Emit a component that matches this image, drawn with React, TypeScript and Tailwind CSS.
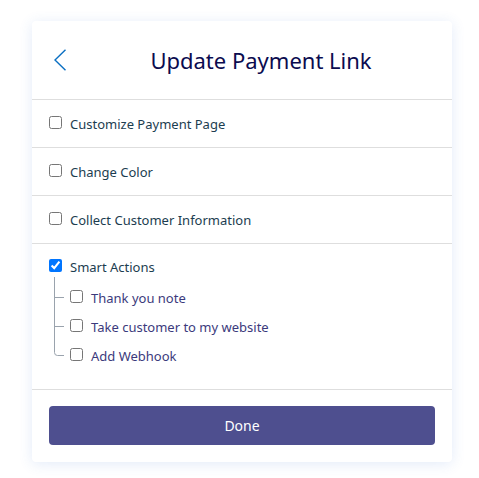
import React, { useState } from "react";

const font = { fontFamily: '"Noto Sans", "Open Sans", sans-serif' };

const sections = [
  "Customize Payment Page",
  "Change Color",
  "Collect Customer Information",
];

const smartChildren = ["Thank you note", "Take customer to my website", "Add Webhook"];

const App: React.FC = () => {
  const [checked, setChecked] = useState<Record<string, boolean>>({
    "Smart Actions": true,
  });

  const toggle = (key: string) =>
    setChecked((prev) => ({ ...prev, [key]: !prev[key] }));

  return (
    <div className="min-h-screen bg-white pt-[21px] pl-[32px]" style={font}>
      <div className="w-[420px] bg-white rounded-[4px] shadow-[0_2px_14px_rgba(60,110,210,0.14)]">
        {/* header */}
        <div className="flex items-center h-[78px]">
          <div className="w-[38px] pl-[22px] flex items-center">
            <svg width="12" height="22" viewBox="0 0 12 22" fill="none">
              <path d="M11.5 0.8 L1 11 L11.5 21.2" stroke="#0a6fc2" strokeWidth="1.4" />
            </svg>
          </div>
          <h1 className="flex-1 text-center text-[22px] text-[#0b0b4f] leading-none">
            Update Payment Link
          </h1>
        </div>

        {sections.map((label) => (
          <label
            key={label}
            className="flex items-center h-[48px] border-t border-[#dedede] px-[17px] gap-[8px] cursor-pointer"
          >
            <input
              type="checkbox"
              className="m-0 mb-[3px] w-[13px] h-[13px]"
              checked={!!checked[label]}
              onChange={() => toggle(label)}
            />
            <span className="text-[13px] text-[#1c3d50] mt-[2px]">{label}</span>
          </label>
        ))}

        {/* smart actions */}
        <div className="border-t border-[#dedede] pt-[12px]">
          <label className="flex items-center h-[21px] px-[17px] gap-[8px] cursor-pointer">
            <input
              type="checkbox"
              className="m-0 mb-[3px] w-[13px] h-[13px]"
              checked={!!checked["Smart Actions"]}
              onChange={() => toggle("Smart Actions")}
            />
            <span className="text-[13px] text-[#1c3d50] mt-[2px]">Smart Actions</span>
          </label>
          <div className="relative ml-[22px] pl-[16px] pt-[6px] pb-[19px]">
            <svg
              className="absolute left-0 top-0"
              width="12"
              height="80"
              viewBox="0 0 12 80"
              fill="none"
            >
              <path
                d="M0.5 0 V75.5 Q0.5 78.5 3.5 78.5 H10 M0.5 20.5 H10 M0.5 49.5 H10"
                stroke="#9aa3ad"
                strokeWidth="1"
              />
            </svg>
            {smartChildren.map((label) => (
              <label key={label} className="flex items-center h-[29px] gap-[8px] cursor-pointer">
                <input
                  type="checkbox"
                  className="m-0 mb-[3px] w-[13px] h-[13px]"
                  checked={!!checked[label]}
                  onChange={() => toggle(label)}
                />
                <span className="text-[13px] text-[#3b3a7c] mt-[2px]">{label}</span>
              </label>
            ))}
          </div>
        </div>

        {/* footer */}
        <div className="border-t border-[#dedede] px-[17px] pt-[16px] pb-[17px]">
          <button className="w-full h-[39px] rounded-[4px] bg-[#4e4f8f] text-white text-[14px]">
            Done
          </button>
        </div>
      </div>
    </div>
  );
};

export default App;
